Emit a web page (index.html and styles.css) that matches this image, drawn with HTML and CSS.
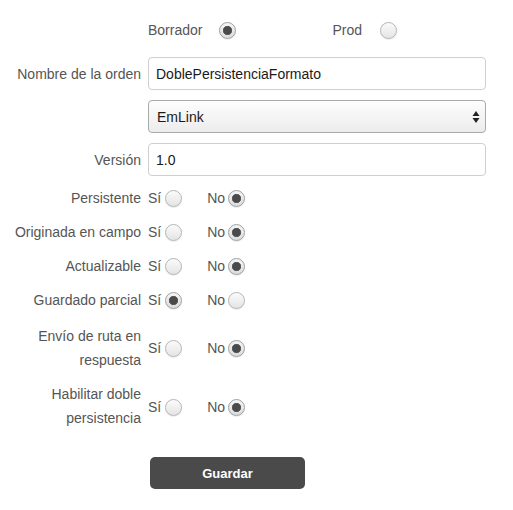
FILE: index.html
```html
<!DOCTYPE html>
<html lang="es">
<head>
<meta charset="utf-8">
<title>Orden</title>
<link rel="stylesheet" href="styles.css">
</head>
<body>
<form class="form">
  <div class="label"></div>
  <div class="mode">
    <label class="opt opt-mode">Borrador <input type="radio" name="mode" class="radio" checked></label>
    <label class="opt opt-prod">Prod <input type="radio" name="mode" class="radio"></label>
  </div>

  <label class="label" for="nombre">Nombre de la orden</label>
  <input id="nombre" class="field" type="text" value="DoblePersistenciaFormato">

  <div class="label"></div>
  <div class="select-wrap">
    <select class="field select"><option>EmLink</option></select>
    <svg class="arrows" width="8" height="14" viewBox="0 0 8 14"><path d="M4 1 L7.5 6 H0.5 Z" fill="#222"/><path d="M4 13 L7.5 8 H0.5 Z" fill="#222"/></svg>
  </div>

  <label class="label" for="version">Versión</label>
  <input id="version" class="field" type="text" value="1.0">

  <div class="label lbl-radio">Persistente</div>
  <div class="yesno">
    <label class="opt">Sí<input type="radio" name="p" class="radio"></label>
    <label class="opt">No<input type="radio" name="p" class="radio" checked></label>
  </div>

  <div class="label lbl-radio">Originada en campo</div>
  <div class="yesno">
    <label class="opt">Sí<input type="radio" name="o" class="radio"></label>
    <label class="opt">No<input type="radio" name="o" class="radio" checked></label>
  </div>

  <div class="label lbl-radio">Actualizable</div>
  <div class="yesno">
    <label class="opt">Sí<input type="radio" name="a" class="radio"></label>
    <label class="opt">No<input type="radio" name="a" class="radio" checked></label>
  </div>

  <div class="label lbl-radio">Guardado parcial</div>
  <div class="yesno">
    <label class="opt">Sí<input type="radio" name="g" class="radio" checked></label>
    <label class="opt">No<input type="radio" name="g" class="radio"></label>
  </div>

  <div class="label lbl-radio lbl-two">Envío de ruta en respuesta</div>
  <div class="yesno yesno-two">
    <label class="opt">Sí<input type="radio" name="e" class="radio"></label>
    <label class="opt">No<input type="radio" name="e" class="radio" checked></label>
  </div>

  <div class="label lbl-radio lbl-two lbl-last">Habilitar doble persistencia</div>
  <div class="yesno yesno-two yesno-last">
    <label class="opt">Sí<input type="radio" name="h" class="radio"></label>
    <label class="opt">No<input type="radio" name="h" class="radio" checked></label>
  </div>

  <div class="label"></div>
  <div class="actions">
    <button type="button" class="btn">Guardar</button>
  </div>
</form>
</body>
</html>
```

FILE: styles.css
```css
html, body {
  margin: 0;
  padding: 0;
  background: #fff;
}

body {
  font-family: "Liberation Sans", Arial, Helvetica, sans-serif;
  font-size: 14px;
  color: #555;
}

.form {
  display: grid;
  grid-template-columns: 141px 338px;
  column-gap: 7px;
  row-gap: 10px;
  padding-top: 18px;
  align-items: center;
}

.label {
  text-align: right;
  color: #555;
  line-height: 24px;
}

.lbl-two {
  width: 112px;
  justify-self: end;
  margin-top: 2px;
}

.lbl-last,
.yesno-last {
  margin-top: 0;
}

.mode {
  display: flex;
  align-items: center;
  height: 24px;
  margin-bottom: 5px;
}

.opt {
  display: inline-flex;
  align-items: center;
  color: #555;
  line-height: 24px;
}

.opt-mode .radio {
  margin-left: 17px;
}

.opt-prod {
  margin-left: 96px;
}

.opt-prod .radio {
  margin-left: 18px;
}

.radio {
  -webkit-appearance: none;
  appearance: none;
  width: 17px;
  height: 17px;
  margin: 0;
  border: 1px solid #b5b5b5;
  border-radius: 50%;
  background: linear-gradient(#fbfbfb, #e4e4e4);
  box-shadow: 0 1px 1px rgba(0, 0, 0, 0.08);
  box-sizing: border-box;
}

.radio:checked {
  border-color: #a0a0a0;
  background:
    radial-gradient(circle, #4a4a4a 0, #4a4a4a 3.8px, #6b6b6b 4.4px, rgba(255,255,255,0) 5px),
    linear-gradient(#f4f4f4, #dcdcdc);
}

.yesno {
  display: flex;
  align-items: center;
  height: 24px;
}

.yesno-two {
  margin-top: 2px;
}

.yesno .opt .radio {
  margin-left: 4px;
}

.yesno .opt + .opt {
  margin-left: 25px;
}

.yesno .opt + .opt .radio {
  margin-left: 3px;
}

.field {
  box-sizing: border-box;
  height: 33px;
  width: 338px;
  margin: 0;
  padding: 0 7px;
  border: 1px solid #cfcfcf;
  border-radius: 4px;
  font-family: "Liberation Sans", Arial, Helvetica, sans-serif;
  font-size: 14px;
  color: #1a1a1a;
  background: #fff;
  outline: none;
}

.select-wrap {
  position: relative;
  width: 338px;
  height: 33px;
}

.select {
  -webkit-appearance: none;
  appearance: none;
  border-color: #a9a9a9;
  background: linear-gradient(#fdfdfd, #ececec);
  padding-left: 8px;
}

.arrows {
  position: absolute;
  right: 6px;
  top: 10px;
  pointer-events: none;
}

.actions {
  margin-top: 17px;
}

.btn {
  margin-left: 2px;
  width: 155px;
  height: 32px;
  border: none;
  border-radius: 5px;
  background: #4a4a4a;
  color: #fff;
  font-family: "Liberation Sans", Arial, Helvetica, sans-serif;
  font-size: 13px;
  font-weight: bold;
  cursor: pointer;
}
```
